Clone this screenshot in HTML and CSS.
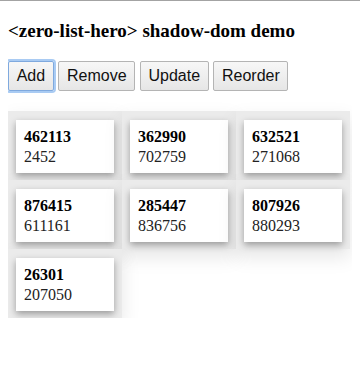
FILE: index.html
```html
<!DOCTYPE html>
<html lang="en">
<head>
    <meta charset="UTF-8">
    <meta name="viewport" content="width=device-width, initial-scale=1.0">
    <title>zero-list-hero shadow-dom demo</title>
    <link rel="stylesheet" href="styles.css">
</head>
<body>
    <h3>&lt;zero-list-hero&gt; shadow-dom demo</h3>
    <div class="toolbar">
        <button class="focused">Add</button>
        <button>Remove</button>
        <button>Update</button>
        <button>Reorder</button>
    </div>
    <div class="list">
        <div class="cell"><div class="card"><b>462113</b><span>2452</span></div></div>
        <div class="cell"><div class="card"><b>362990</b><span>702759</span></div></div>
        <div class="cell"><div class="card"><b>632521</b><span>271068</span></div></div>
        <div class="cell"><div class="card"><b>876415</b><span>611161</span></div></div>
        <div class="cell"><div class="card"><b>285447</b><span>836756</span></div></div>
        <div class="cell"><div class="card"><b>807926</b><span>880293</span></div></div>
        <div class="cell"><div class="card"><b>26301</b><span>207050</span></div></div>
    </div>
</body>
</html>
```

FILE: styles.css
```css
html {
    border-top: 1px solid #a3a3a3;
    background-color: #fff;
}
body {
    margin: 8px;
    font-family: 'Liberation Serif', 'Times New Roman', serif;
    color: #000;
}
h3 {
    font-size: 19px;
    margin: 11px 0 18.72px 0;
}
.toolbar {
    display: flex;
    gap: 4.5px;
}
.toolbar button {
    font-family: 'Liberation Sans', Arial, sans-serif;
    font-size: 16px;
    line-height: 18px;
    padding: 5px 7.7px;
    color: #111;
    background: linear-gradient(#f7f7f7, #e6e6e6);
    border: 1px solid #b4b4b4;
    border-radius: 2px;
}
.toolbar button.focused {
    border-color: #7fa9de;
    box-shadow: 0 0 0 2px #a9cbf3;
}
.list {
    display: grid;
    grid-template-columns: repeat(3, 1fr);
    margin-top: 20px;
    margin-right: 2px;
}
.cell {
    background-color: #ebebeb;
    padding: 9px 8px 7px 8px;
    box-shadow: 0 8px 18px rgba(0, 0, 0, 0.1);
}
.card {
    display: flex;
    flex-direction: column;
    background-color: #fff;
    padding: 7px 8px 6px 8px;
    font-size: 16px;
    line-height: 20px;
    box-shadow: 0 3px 7px rgba(0, 0, 0, 0.35);
}
.card span {
    color: #222;
}
```
